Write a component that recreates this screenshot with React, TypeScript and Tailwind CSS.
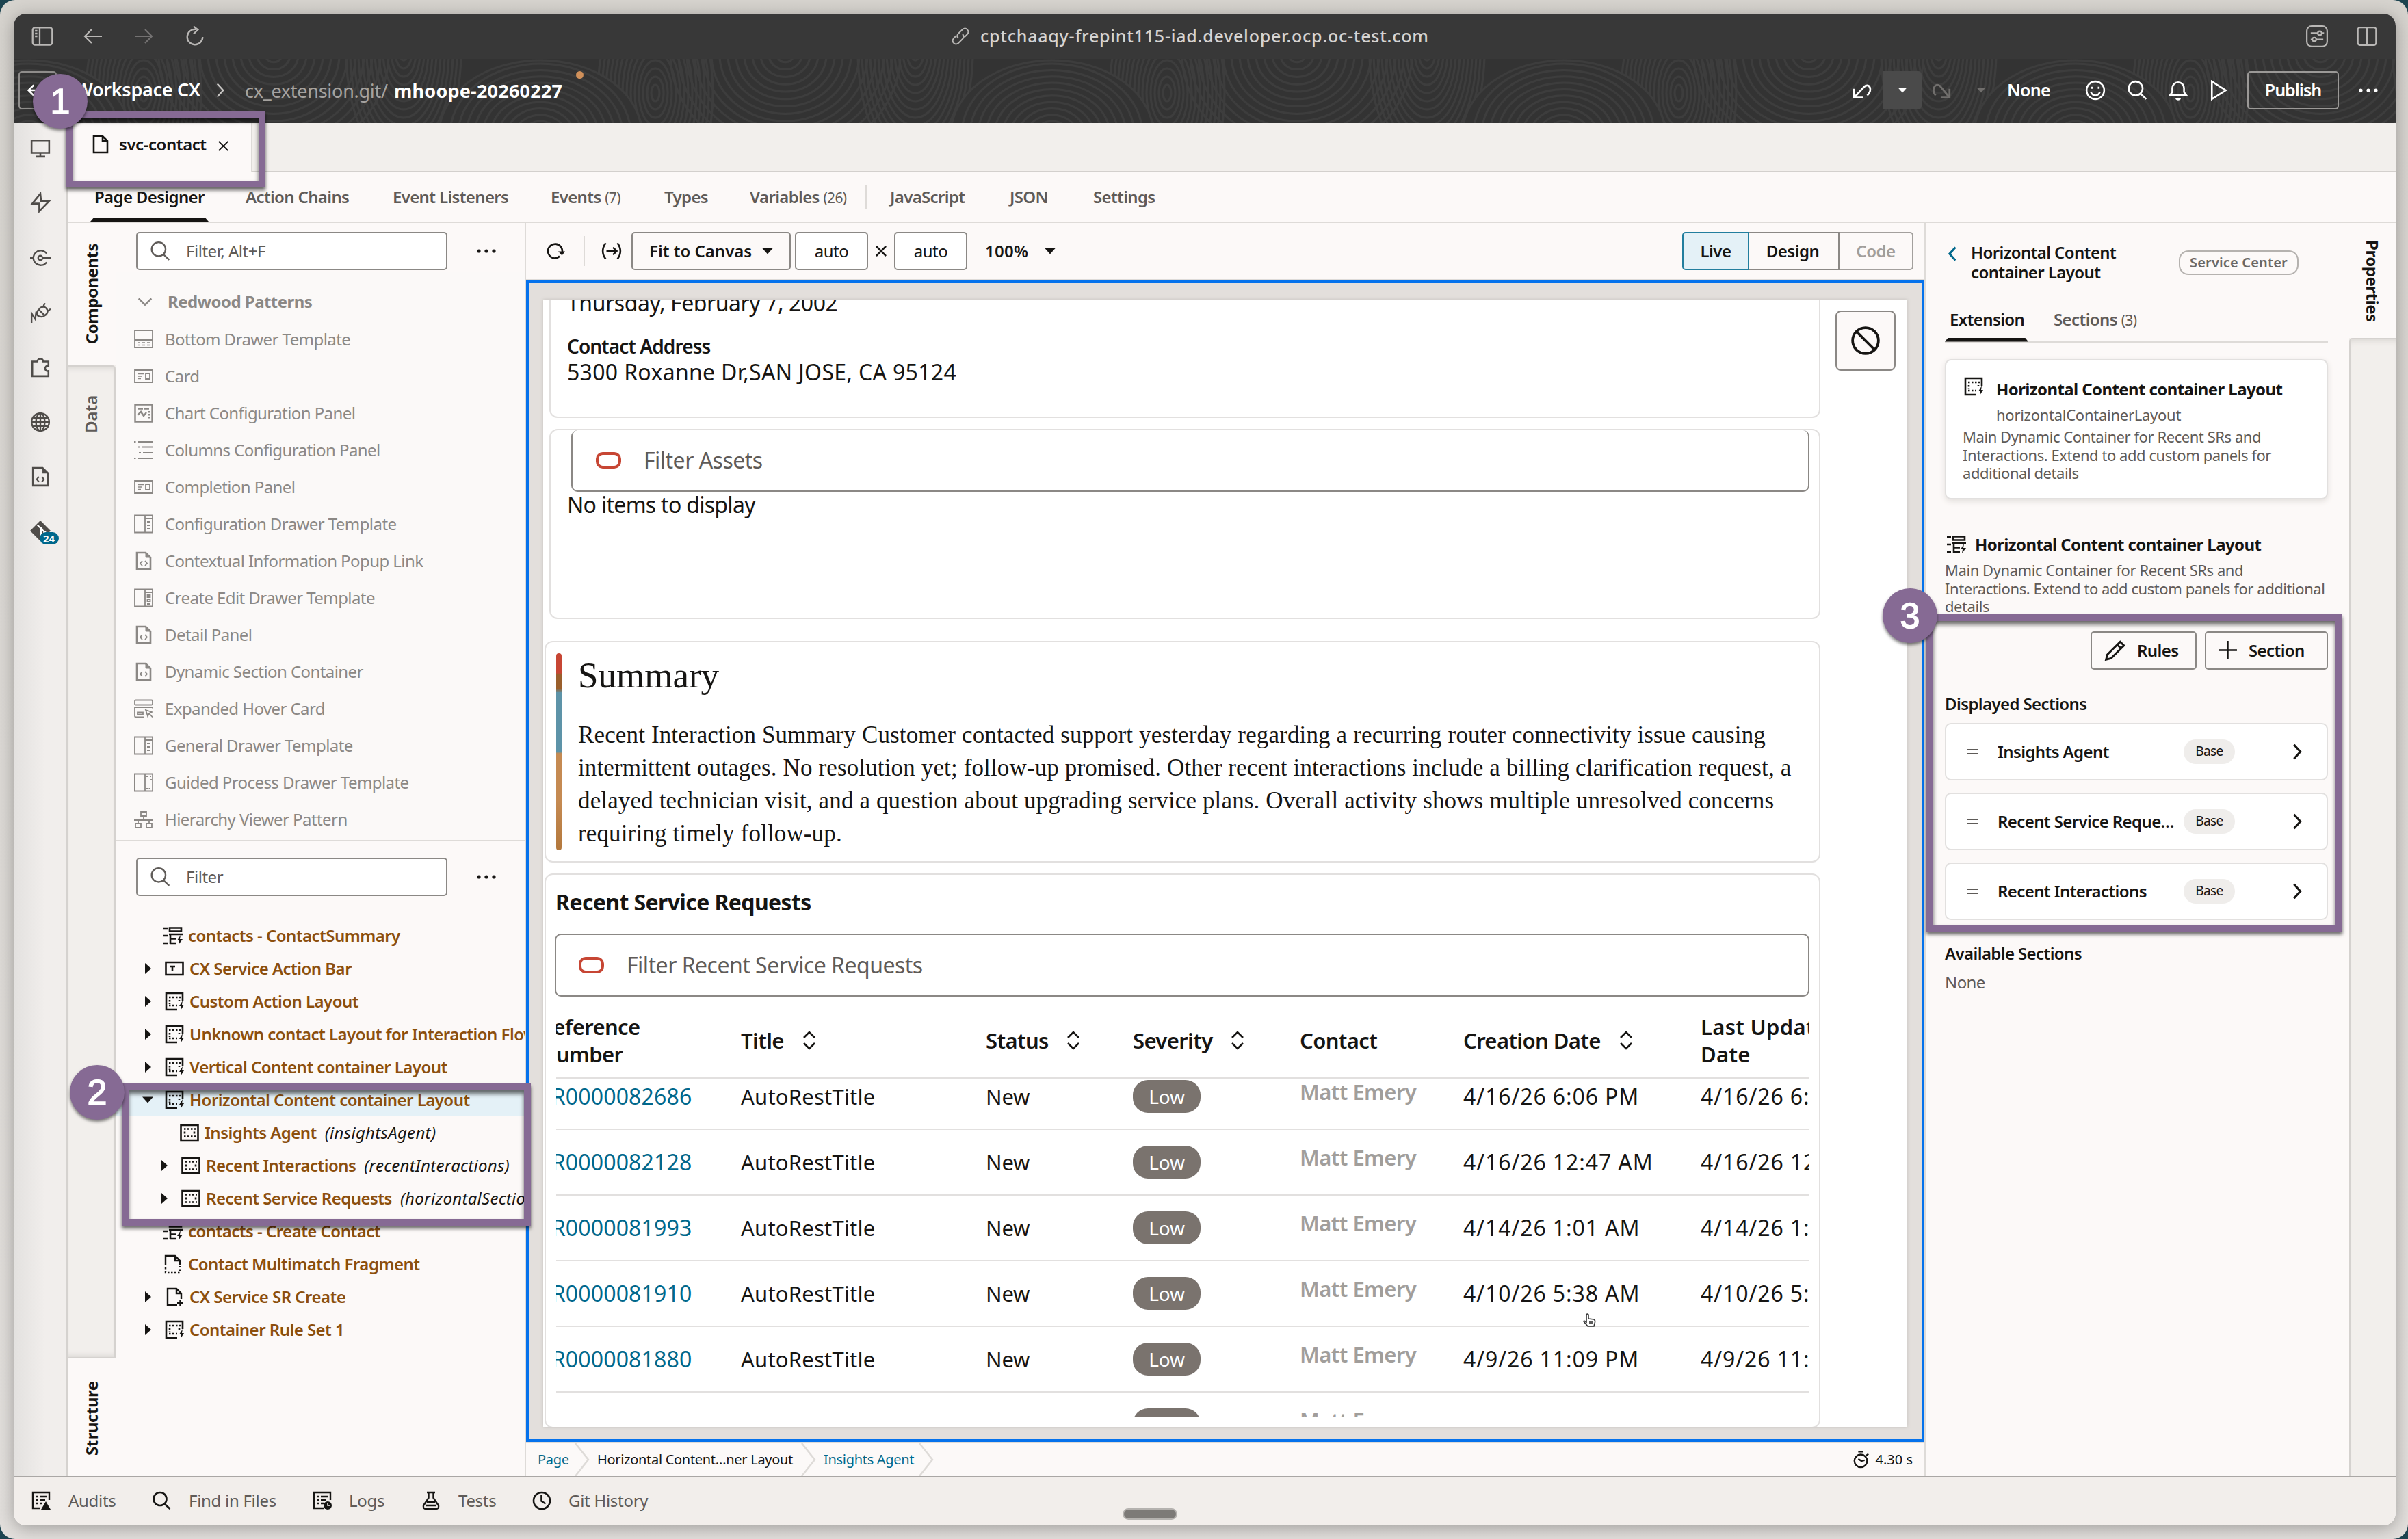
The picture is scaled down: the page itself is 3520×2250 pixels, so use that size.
import type { ReactNode } from "react";

interface IconProps {
  size?: number;
  sw?: number;
  className?: string;
  children?: ReactNode;
}

function Svg({ size = 28, sw = 2, className = "", children }: IconProps) {
  return (
    <svg
      width={size}
      height={size}
      viewBox="0 0 28 28"
      fill="none"
      stroke="currentColor"
      strokeWidth={sw}
      className={`shrink-0 ${className}`}
    >
      {children}
    </svg>
  );
}

function Caret({ className = "" }: { className?: string }) {
  return (
    <svg width="16" height="10" viewBox="0 0 16 10" fill="currentColor" className={`shrink-0 ${className}`}>
      <path d="M0 0.5h16L8 9.5z" />
    </svg>
  );
}

function SearchIcon({ size = 30, sw = 2.2, className = "" }: IconProps) {
  return (
    <Svg size={size} sw={sw} className={className}>
      <circle cx="12" cy="11.5" r="9.5" />
      <path d="M18.5 18.5l8 7.5" />
    </Svg>
  );
}

function MoreIcon({ className = "" }: { className?: string }) {
  return (
    <Svg className={className}>
      <g fill="currentColor" stroke="none">
        <circle cx="3" cy="14" r="2.6" />
        <circle cx="14" cy="14" r="2.6" />
        <circle cx="25" cy="14" r="2.6" />
      </g>
    </Svg>
  );
}

function CodeFileIcon({ size = 28 }: { size?: number }) {
  return (
    <Svg size={size} sw={2.6}>
      <path d="M4 2h13l7 7v17H4z" />
      <path d="M17 2v7h7z" fill="currentColor" strokeWidth="1" />
      <path d="M12 14l-3 3.5 3 3.5M16 14l3 3.5-3 3.5" strokeWidth="1.8" />
    </Svg>
  );
}

const patternIcons: Record<string, ReactNode> = {
  bottom: (
    <Svg sw={1.8}>
      <path d="M1 1h26v25H1zM1 15h26" />
      <path d="M5 19h18M5 22.5h18" strokeDasharray="4 3" strokeWidth="1.5" />
    </Svg>
  ),
  card: (
    <Svg sw={1.8}>
      <path d="M1 5h26v18H1zM17 10h6v8h-6z" />
      <path d="M5 10.5h9M5 14h7M5 17.5h5" strokeWidth="1.6" />
    </Svg>
  ),
  chart: (
    <Svg sw={2.4}>
      <path d="M1.500 1.500h25v25h-25z" />
      <path d="M5 7.500h8M15 7.500h7" strokeWidth="2.400" />
      <path d="M5 17l5-5 4 6 4-5" strokeWidth="2.400" />
      <path d="M21.500 11v12" strokeDasharray="2.500 1.500" strokeWidth="3" />
    </Svg>
  ),
  columns: (
    <Svg sw={2}>
      <path d="M6 2h22M11 9.500h17M13 18h15M6 26h22" />
      <path d="M0 2h2.500M5.500 9.500h3M7 18h3M0 26h2.500" />
    </Svg>
  ),
  drawer: (
    <Svg sw={1.8}>
      <path d="M1 1.500h26v25H1zM16 1.500v25M16 6h11" />
      <path d="M19 11h5M19 16h5M19 21h5" />
    </Svg>
  ),
  edit: (
    <Svg sw={1.8}>
      <path d="M1 1.500h26v25H1zM16 1.500v25M16 6h11" />
      <path d="M19.500 10h4v3h-4zM19.500 16h4v3h-4zM19 23h5" />
    </Svg>
  ),
  code: <CodeFileIcon />,
  hover: (
    <Svg sw={1.8}>
      <rect x="1" y="1.500" width="26" height="7" rx="1.500" />
      <path d="M27 13.500v-1.500H1v12.500q0 2 2 2h11M5 19.500h8v3H5z" />
      <path d="M17 16l9 3-4 2-2 4zM22 21l5 5.500" />
    </Svg>
  ),
  guided: (
    <Svg sw={1.8}>
      <path d="M0.900 1.500h26.200v25H0.900zM16 1.500v25" />
      <path d="M18 5h3M23 5h2M25 9v3M18 23h7" strokeDasharray="2 1.500" />
    </Svg>
  ),
  hierarchy: (
    <Svg sw={1.8}>
      <path d="M10 3h8v6h-8zM2 20h8v6H2zM18 20h8v6h-8zM14 9v6M0 15h28M6 15v5M22 15v5" />
    </Svg>
  ),
};

const patterns = [
  ["bottom", "Bottom Drawer Template"],
  ["card", "Card"],
  ["chart", "Chart Configuration Panel"],
  ["columns", "Columns Configuration Panel"],
  ["card", "Completion Panel"],
  ["drawer", "Configuration Drawer Template"],
  ["code", "Contextual Information Popup Link"],
  ["edit", "Create Edit Drawer Template"],
  ["code", "Detail Panel"],
  ["code", "Dynamic Section Container"],
  ["hover", "Expanded Hover Card"],
  ["drawer", "General Drawer Template"],
  ["guided", "Guided Process Drawer Template"],
  ["hierarchy", "Hierarchy Viewer Pattern"],
];

function DynamicIcon() {
  return (
    <Svg sw={2.6}>
      <path d="M26 13V2H2v24h16" />
      <path d="M6 8h17M6 20h12" strokeDasharray="2.500 2.500" />
      <path d="M7 12v6M21 12v2" strokeDasharray="2.500 2" />
      <path d="M26 13l-5 8h3l-1 6 5-8h-3z" fill="currentColor" stroke="none" />
    </Svg>
  );
}

function FormIcon() {
  return (
    <Svg sw={2.6}>
      <path d="M0 3h6M0 14h6M0 25h6" />
      <path d="M9 2.500h17v5H9zM8 12h20M10 12v14M10 18.500h9M10 25h9" />
      <path d="M25 13l-5 8h3l-1 6 6-8h-4z" fill="currentColor" stroke="none" />
    </Svg>
  );
}

const treeIcons: Record<string, ReactNode> = {
  form: <FormIcon />,
  dynamic: <DynamicIcon />,
  text: (
    <Svg sw={2.6}>
      <path d="M1.500 5h25v18h-25zM7 11h8M11 11v7" />
    </Svg>
  ),
  flex: (
    <Svg sw={2.6}>
      <path d="M1.500 3h25v22h-25z" />
      <path d="M6 8.500h17M6 19.500h17" strokeDasharray="2.500 2.500" />
      <path d="M7 12.500v3M21 12.500v3" />
    </Svg>
  ),
  fragment: (
    <Svg sw={2.4}>
      <path d="M3 16V2h14l7 7v7M17 2v7h7" />
      <path d="M3 19v7h21v-9" strokeDasharray="2.500 2.500" />
    </Svg>
  ),
  page: (
    <Svg sw={2.4}>
      <path d="M18 26H4V2h13l7 7v8M17 2v7h7M18 23h9M22.500 18.500v9" />
    </Svg>
  ),
};

interface TreeRow {
  icon: string;
  label: string;
  id?: string;
  level?: number;
  state?: "open" | "closed";
  selected?: boolean;
}

const tree: TreeRow[] = [
  { icon: "form", label: "contacts - ContactSummary" },
  { icon: "text", label: "CX Service Action Bar", state: "closed" },
  { icon: "dynamic", label: "Custom Action Layout", state: "closed" },
  { icon: "dynamic", label: "Unknown contact Layout for Interaction Flow", state: "closed" },
  { icon: "dynamic", label: "Vertical Content container Layout", state: "closed" },
  { icon: "dynamic", label: "Horizontal Content container Layout", state: "open", selected: true },
  { icon: "flex", label: "Insights Agent", id: "(insightsAgent)", level: 1 },
  { icon: "flex", label: "Recent Interactions", id: "(recentInteractions)", level: 1, state: "closed" },
  { icon: "flex", label: "Recent Service Requests", id: "(horizontalSection)", level: 1, state: "closed" },
  { icon: "form", label: "contacts - Create Contact" },
  { icon: "fragment", label: "Contact Multimatch Fragment" },
  { icon: "page", label: "CX Service SR Create", state: "closed" },
  { icon: "dynamic", label: "Container Rule Set 1", state: "closed" },
];

const requests = [
  ["SR0000082686", "4/16/26 6:06 PM"],
  ["SR0000082128", "4/16/26 12:47 AM"],
  ["SR0000081993", "4/14/26 1:01 AM"],
  ["SR0000081910", "4/10/26 5:38 AM"],
  ["SR0000081880", "4/9/26 11:09 PM"],
  ["SR0000081875", "4/9/26 10:58 PM"],
];

function TitleBar() {
  return (
    <div className="flex h-[66px] items-center bg-[#383838] text-[#b9b7b5]">
      <Svg size={32} sw={2} className="ml-[26px]">
        <rect x="1.500" y="3" width="25" height="22" rx="3" />
        <path d="M10.500 3v22M4.500 7h3M4.500 10.500h3M4.500 14h3" />
      </Svg>
      <Svg size={28} sw={2.2} className="ml-[44px]">
        <path d="M27 14H2M12 4L2 14l10 10" />
      </Svg>
      <Svg size={28} sw={2.2} className="ml-[46px] text-[#747272]">
        <path d="M1 14h25M16 4l10 10-10 10" />
      </Svg>
      <Svg size={30} sw={2.2} className="ml-[46px]">
        <path d="M15 4.500a10.500 10.500 0 1 0 9.500 10.500M12 0.500l6 4.500-6 6" />
      </Svg>
      <Svg size={28} sw={2} className="ml-[1090px]">
        <path d="M11 17c-3-3-2-5 0-7l6-6c5-4 11 2 7 7l-4 4M17 11c3 3 2 5 0 7l-6 6c-5 4-11-2-7-7l4-4" />
      </Svg>
      <span className="ml-[15px] w-[1938px] text-[25px] font-medium tracking-[0.031em] text-[#d5d3d1]">
        cptchaaqy-frepint115-iad.developer.ocp.oc-test.com
      </span>
      <Svg size={32} sw={1.9}>
        <rect x="1" y="1" width="26" height="26" rx="6" />
        <path d="M6 10h9M20 10h3M6 18h2M13 18h9" />
        <circle cx="17.500" cy="10" r="2.500" />
        <circle cx="10.500" cy="18" r="2.500" />
      </Svg>
      <Svg size={30} sw={2.2} className="ml-[42px]">
        <rect x="1.500" y="2" width="25" height="24" rx="3" />
        <path d="M14 2v24" />
      </Svg>
    </div>
  );
}

function HeaderTexture() {
  const steps = [12, 24, 36, 48, 60, 72, 84, 96, 108, 120, 132, 144, 156, 168];
  return (
    <svg className="absolute inset-0 h-full w-full" fill="none" stroke="#3d3d3d" strokeWidth="3">
      <defs>
        <pattern id="rings" width="748" height="94" patternUnits="userSpaceOnUse">
          {steps.map((r) => (
            <ellipse key={`b${r}`} cx="380" cy="-6" rx={r} ry={r * 0.9} />
          ))}
          {steps.map((r) => (
            <ellipse key={`s${r}`} cx="190" cy="50" rx={r * 0.5} ry={r} />
          ))}
          {steps.map((r) => (
            <ellipse key={`t${r}`} cx="570" cy="-10" rx={r * 0.5} ry={r} />
          ))}
          <ellipse cx="22" cy="110" rx="148" ry="108" fill="#333333" />
          <ellipse cx="770" cy="110" rx="148" ry="108" fill="#333333" />
          {steps.slice(0, 11).map((r) => (
            <g key={`d${r}`}>
              <ellipse cx="22" cy="110" rx={r} ry={r * 0.78} />
              <ellipse cx="770" cy="110" rx={r} ry={r * 0.78} />
            </g>
          ))}
        </pattern>
      </defs>
      <rect width="100%" height="100%" fill="url(#rings)" stroke="none" />
    </svg>
  );
}

function Header() {
  return (
    <div className="relative h-[94px] bg-[#333333] text-white">
      <HeaderTexture />
      <div className="relative flex h-[94px] items-center pb-[3px]">
        <div className="ml-[7px] flex h-[56px] w-[56px] items-center rounded-[5px] border-2 border-[#8f8d8b] pl-[10px]">
          <Svg size={24} sw={3}>
            <path d="M27 14H3M12 5l-9 9 9 9" />
          </Svg>
        </div>
        <span className="ml-[27px] w-[200px] text-[27px] font-semibold tracking-[-0.01em] whitespace-nowrap">
          Workspace CX
        </span>
        <Svg size={24} sw={2.6} className="text-[#c9c7c5]">
          <path d="M9 3l10 11L9 25" />
        </Svg>
        <span className="ml-[24px] w-[218px] pt-[4px] text-[27px] tracking-[-0.01em] text-[#a5a29f]">
          cx_extension.git/
        </span>
        <span className="w-[266px] pt-[4px] text-[27px] font-bold tracking-[0.008em] whitespace-nowrap">
          mhoope-20260227
        </span>
        <span className="mb-[44px] h-[11px] w-[11px] rounded-full bg-[#d0905a]" />
        <div className="mr-[26px] ml-auto flex items-center">
          <Svg size={30} sw={2.6}>
            <path d="M3 12v12h12M3 24L17 9c7-6 12 5 4 12" />
          </Svg>
          <div className="ml-[16px] flex h-[56px] w-[56px] items-center justify-center rounded-r-[5px] bg-[#4a4a4a]">
            <Caret className="w-[12px]" />
          </div>
          <Svg size={30} sw={2.6} className="ml-[14px] text-[#706e6c]">
            <path d="M25 12v12H13M25 24L12 8C5 3 0 13 6 21" />
          </Svg>
          <Caret className="ml-[37px] w-[12px] text-[#706e6c]" />
          <span className="ml-[32px] w-[114px] text-[25px] font-semibold tracking-[-0.03em]">None</span>
          <Svg size={30} sw={2.4}>
            <circle cx="14" cy="14" r="12" />
            <path d="M8 16.500c2 6 10 6 12 0" />
            <path d="M9.500 9v3M18.500 9v3" />
          </Svg>
          <SearchIcon className="ml-[31px]" sw={2.4} />
          <Svg size={30} sw={2.4} className="ml-[30px]">
            <path d="M3 20.500h22l-3-4V11a8 8 0 0 0-16 0v5.500zM11 25q3 3 6 0" />
          </Svg>
          <Svg size={30} sw={2.4} className="ml-[30px]">
            <path d="M4 2l19 12L4 26z" />
          </Svg>
          <div className="ml-[26px] flex h-[56px] w-[134px] items-center justify-center rounded-[5px] border-2 border-[#9b9997] text-[25px] font-semibold tracking-[-0.04em]">
            Publish
          </div>
          <MoreIcon className="ml-[29px]" />
        </div>
      </div>
    </div>
  );
}

function Rail() {
  return (
    <div className="flex w-[79px] flex-col items-center border-r-2 border-[#d5d2cf] bg-linear-to-r from-[#e3e1df] to-[#f1eeec] to-60% pt-[21px] text-[#4f4c49]">
      <Svg size={30} sw={2.4}>
        <path d="M2 4h24v17H2zM14 21v4M7.500 26h13" />
      </Svg>
      <Svg size={30} sw={2.4} className="mt-[50px]">
        <path d="M14 2L3 15.500h9.500V26L26 12H15z" strokeLinejoin="miter" />
      </Svg>
      <Svg size={30} sw={2.2} className="mt-[51px]">
        <path d="M22.500 8a10 10 0 1 0 0 12M17 14h11M0 14h4" />
        <circle cx="14" cy="14" r="3" />
      </Svg>
      <Svg size={30} sw={2.2} className="mt-[50px]">
        <path d="M12 10l8 8c4-2 5-7 2-10s-8-2-10 2zM12 10c-4 3-3 8 0 9s6 1 8-1M18 6l2-5M24 12l4-3M11 18l-3-3-1 8-5-8v13" />
      </Svg>
      <Svg size={30} sw={2.4} className="mt-[50px]">
        <path d="M3 6h7c0-5 8-5 8 0h7v6c-6-1-6 8 0 7v7H3z" />
      </Svg>
      <Svg size={30} sw={2.2} className="mt-[50px]">
        <circle cx="14" cy="14" r="12" />
        <path d="M2 14h24M14 2v24M4 8.500h20M4 19.500h20" />
        <ellipse cx="14" cy="14" rx="6" ry="12" />
      </Svg>
      <div className="mt-[50px]">
        <CodeFileIcon size={30} />
      </div>
      <div className="relative mt-[49px]">
        <Svg size={30} sw={2}>
          <path d="M14 0l14 14-14 14L0 14z" fill="currentColor" stroke="none" />
          <path d="M10 6l5 5v10M15 11l5 5" stroke="#fff" />
          <g fill="#fff" stroke="none">
            <circle cx="15" cy="11" r="2" />
            <circle cx="15" cy="21" r="2" />
            <circle cx="20" cy="16" r="2" />
          </g>
        </Svg>
        <span className="absolute top-[17px] left-[14px] flex h-[18px] w-[28px] items-center justify-center rounded-full bg-[#00688c] text-[15px] font-bold text-white">
          24
        </span>
      </div>
    </div>
  );
}

const pageTabs = [
  { label: "Action Chains", width: "w-[215px]" },
  { label: "Event Listeners", width: "w-[231px]" },
  { label: "Events", count: "(7)", width: "w-[166px]" },
  { label: "Types", width: "w-[125px]" },
  { label: "Variables", count: "(26)", width: "w-[169px]" },
];

function PageTabs() {
  return (
    <>
      <div className="flex h-[72px]">
        <div className="flex w-[270px] items-center border-r-2 border-[#dedbd8] bg-[#fcf9f8] pb-[11px] pl-[34px]">
          <Svg size={28} sw={2.6}>
            <path d="M4 2h13l7 7v17H4zM17 2v7h7" />
          </Svg>
          <span className="ml-[13px] w-[137px] text-[24px] font-semibold tracking-[-0.018em]">svc-contact</span>
          <Svg size={17} sw={3.2} className="mt-[5px] ml-[7px]">
            <path d="M3 3l22 22M25 3L3 25" />
          </Svg>
        </div>
        <div className="flex-1 border-b-2 border-[#d3d0cd] bg-[#f2efec]" />
      </div>
      <div className="flex h-[74px] items-center border-b-2 border-[#dedbd8] bg-[#fcf9f8] pl-[39px] text-[24px] font-semibold tracking-[-0.027em] text-[#5f5b58]">
        <div className="relative flex h-full w-[221px] items-center text-[#161513]">
          Page Designer
          <span className="absolute bottom-0 -left-[6px] h-[6px] w-[173px] bg-[#161513] [clip-path:polygon(3%_0,97%_0,100%_100%,0_100%)]" />
        </div>
        {pageTabs.map((tab) => (
          <div key={tab.label} className={`${tab.width} whitespace-nowrap`}>
            {tab.label} {tab.count && <span className="text-[21px] font-normal">{tab.count}</span>}
          </div>
        ))}
        <span className="mr-[34px] h-[36px] w-[2px] bg-[#dedbd8]" />
        <span className="w-[175px]">JavaScript</span>
        <span className="w-[122px]">JSON</span>
        <span>Settings</span>
      </div>
    </>
  );
}

function FilterBox({ placeholder }: { placeholder: string }) {
  return (
    <div className="flex items-center pl-[30px]">
      <div className="flex h-[56px] w-[455px] items-center rounded-[5px] border-2 border-[#8b8885] bg-white pl-[18px] text-[#5f5b58]">
        <SearchIcon />
        <span className="ml-[23px] text-[24px] tracking-[-0.02em]">{placeholder}</span>
      </div>
      <MoreIcon className="ml-[43px]" />
    </div>
  );
}

function LeftPanel() {
  return (
    <div className="flex w-[670px] border-r-2 border-[#dedbd8]">
      <div className="flex w-[70px] flex-col bg-[#f2efec] text-[24px] leading-none">
        <div className="flex h-[208px] items-end justify-center bg-[#fcf9f8] pr-px pb-[31px] font-bold tracking-[-0.02em]">
          <span className="rotate-180 [writing-mode:vertical-rl]">Components</span>
        </div>
        <div className="flex flex-1 justify-center rounded-tr-[5px] border-y-2 border-r-2 border-[#d5d2cf] pt-[39px] font-semibold text-[#5f5b58] shadow-[inset_0_8px_8px_-6px_#d8d5d2,inset_0_-8px_8px_-6px_#d8d5d2]">
          <span className="h-[58px] rotate-180 [writing-mode:vertical-rl]">Data</span>
        </div>
        <div className="flex h-[172px] justify-center bg-[#fcf9f8] pt-[32px] pr-px font-bold tracking-[-0.02em]">
          <span className="h-[110px] rotate-180 [writing-mode:vertical-rl]">Structure</span>
        </div>
      </div>
      <div className="flex min-w-0 flex-1 flex-col overflow-hidden">
        <div className="h-[904px] border-b-2 border-[#dedbd8] bg-[#fbf9f8] text-[#8b8885]">
          <div className="h-[72px] bg-[#fcf9f8] pt-[13px] text-[#161513]">
            <FilterBox placeholder="Filter, Alt+F" />
          </div>
          <div className="flex h-[71px] items-center pt-[14px] pl-[30px]">
            <Svg size={26} sw={2.8}>
              <path d="M4 9l10 10L24 9" />
            </Svg>
            <span className="ml-[20px] text-[24px] font-bold tracking-[-0.023em]">Redwood Patterns</span>
          </div>
          {patterns.map(([icon, label]) => (
            <div key={label} className="flex h-[54px] items-center pl-[27px]">
              {patternIcons[icon]}
              <span className="ml-[17px] text-[24px] tracking-[-0.024em]">{label}</span>
            </div>
          ))}
        </div>
        <div className="pt-[24px]">
          <FilterBox placeholder="Filter" />
        </div>
        <div className="mt-[34px] text-[24px] font-semibold tracking-[-0.022em] whitespace-nowrap text-[#8c4f0d]">
          {tree.map((row) => (
            <div
              key={row.label}
              className={`flex h-[48px] items-center ${row.level ? "pl-[66px]" : "pl-[42px]"} ${row.selected ? "bg-[#e4f1f7]" : ""}`}
            >
              <span className={`flex shrink-0 items-center text-[#161513] ${row.state ? "w-[30px]" : "w-[28px]"}`}>
                {row.state === "closed" && (
                  <svg width="10" height="16" viewBox="0 0 10 16" fill="currentColor">
                    <path d="M1 0v16l9-8z" />
                  </svg>
                )}
                {row.state === "open" && <Caret className="-ml-[3px]" />}
              </span>
              <span className="text-[#161513]">{treeIcons[row.icon]}</span>
              <span className="ml-[8px]">{row.label}</span>
              {row.id && (
                <span className="ml-[12px] font-normal tracking-[0.012em] text-[#161513] italic">{row.id}</span>
              )}
            </div>
          ))}
        </div>
      </div>
    </div>
  );
}

function CanvasToolbar() {
  return (
    <div className="flex h-[84px] items-center border-b-2 border-[#dedbd8] text-[24px] font-semibold tracking-[-0.02em]">
      <Svg size={28} sw={2.6} className="ml-[29px]">
        <path d="M12 24.500a10.500 10.500 0 1 1 12-10v2" />
        <path d="M18 14.500h10l-4.500 6z" fill="currentColor" stroke="none" />
        <path d="M12 24.500q5 0 8-3" />
      </Svg>
      <span className="ml-[27px] h-[44px] w-[2px] bg-[#dedbd8]" />
      <Svg size={30} sw={2.4} className="ml-[24px]">
        <path d="M6 3q-8 11 0 22M22 3q8 11 0 22M7 14h14M16 9l5 5-5 5" />
      </Svg>
      <div className="ml-[14px] flex h-[56px] w-[233px] items-center rounded-[5px] border-2 border-[#8b8885] pl-[24px]">
        <span className="w-[165px] tracking-[0em] whitespace-nowrap">Fit to Canvas</span>
        <Caret />
      </div>
      <div className="ml-[6px] flex h-[56px] w-[107px] items-center justify-center rounded-[5px] border-2 border-[#8b8885] bg-white font-normal">
        auto
      </div>
      <div className="flex w-[38px] justify-center">
        <Svg size={18} sw={4}>
          <path d="M3 3l22 22M25 3L3 25" />
        </Svg>
      </div>
      <div className="flex h-[56px] w-[107px] items-center justify-center rounded-[5px] border-2 border-[#8b8885] bg-white font-normal">
        auto
      </div>
      <span className="ml-[26px] w-[87px] tracking-[0.01em]">100%</span>
      <Caret />
      <div className="mr-[16px] ml-auto flex h-[56px]">
        <div className="flex w-[98px] items-center justify-center rounded-l-[5px] border-2 border-[#227e9e] bg-[#e4f1f7]">
          Live
        </div>
        <div className="flex w-[132px] items-center justify-center border-y-2 border-r-2 border-[#8b8885] pr-[3px]">
          Design
        </div>
        <div className="flex w-[108px] items-center justify-center rounded-r-[5px] border-2 border-l-0 border-[#a3a09d] text-[#a19e9b]">
          Code
        </div>
      </div>
    </div>
  );
}

function SearchField({ placeholder }: { placeholder: string }) {
  return (
    <>
      <span className="h-[24px] w-[37px] rounded-[10px] border-[4px] border-[#c74634]" />
      <span className="ml-[33px] text-[32px] tracking-[-0.016em] text-[#5f5b58]">{placeholder}</span>
    </>
  );
}

function SortIcon() {
  return (
    <svg width="20" height="28" viewBox="0 0 20 28" fill="none" stroke="currentColor" strokeWidth="2.600">
      <path d="M2 10l8-8 8 8M2 18l8 8 8-8" />
    </svg>
  );
}

const columns = "grid grid-cols-[294px_358px_215px_244px_239px_347px_260px]";

function RequestsTable() {
  return (
    <div className="ml-[15px] h-[614px] w-[1832px] overflow-hidden pt-[10px] text-[31px] tracking-[-0.005em] whitespace-nowrap">
      <div className="-ml-[24px] w-[1960px]">
        <div className={`${columns} h-[110px] items-center border-b-2 border-[#e2e0df] font-semibold tracking-[-0.02em]`}>
          <span className="leading-[40px]">
            Reference
            <br />
            Number
          </span>
          <span className="flex items-center gap-[27px]">
            Title <SortIcon />
          </span>
          <span className="flex items-center gap-[26px]">
            Status <SortIcon />
          </span>
          <span className="flex items-center gap-[26px]">
            Severity <SortIcon />
          </span>
          <span>Contact</span>
          <span className="flex items-center gap-[27px]">
            Creation Date <SortIcon />
          </span>
          <span className="leading-[40px] tracking-[0.01em]">
            Last Updated
            <br />
            Date
          </span>
        </div>
        <div className="h-[494px] overflow-hidden">
          <div className="-mt-[21px]">
            {requests.map(([ref, date]) => (
              <div key={ref} className={`${columns} h-[96px] items-center border-b-2 border-[#e2e0df]`}>
                <span className="text-[32px] tracking-[0.005em] text-[#00688c]">{ref}</span>
                <span className="tracking-[0.007em]">AutoRestTitle</span>
                <span>New</span>
                <span className="flex h-[48px] w-[99px] items-center justify-center rounded-[22px] bg-[#7a736e] text-[28px] text-white">
                  Low
                </span>
                <span className="pb-[14px] font-semibold tracking-[-0.018em] text-[#a19e9b]">Matt Emery</span>
                <span className="text-[32px] tracking-[0.028em]">{date}</span>
                <span className="text-[32px] tracking-[0.028em]">{date}</span>
              </div>
            ))}
          </div>
        </div>
      </div>
    </div>
  );
}

function Canvas() {
  return (
    <div className="flex w-[2044px] flex-col">
      <CanvasToolbar />
      <div className="h-[1698px] border-[4px] border-[#0572ec] bg-[#e3dfdc] px-[21px] pt-[24px]">
        <div className="flex h-[1648px] overflow-hidden bg-white text-[#161513] shadow-[0_0_5px_#c4c0bd]">
          <div className="w-[1867px]">
            <div className="ml-[9px] flex h-[173px] flex-col rounded-b-[12px] border-2 border-t-0 border-[#e2e0df] pl-[24px]">
              <p className="-mt-[18px] text-[32px] leading-[46px] tracking-[-0.014em]">Thursday, February 7, 2002</p>
              <p className="mt-[21px] text-[28px] leading-[38px] font-semibold tracking-[-0.032em]">Contact Address</p>
              <p className="text-[32px] leading-[38px] tracking-[0.01em]">5300 Roxanne Dr,SAN JOSE, CA 95124</p>
            </div>
            <div className="mt-[16px] ml-[9px] h-[278px] rounded-[12px] border-2 border-[#e2e0df]">
              <div className="ml-[30px] flex h-[90px] w-[1810px] items-center rounded-[9px] border-2 border-t-0 border-[#8b8885] pl-[34px]">
                <SearchField placeholder="Filter Assets" />
              </div>
              <p className="ml-[24px] text-[32px] leading-[38px] tracking-[-0.022em]">No items to display</p>
            </div>
            <div className="mt-[32px] ml-[2px] flex h-[324px] rounded-[12px] border-2 border-[#e2e0df] pt-[16px] pl-[15px]">
              <div className="h-[288px] w-[8px] rounded-full bg-[linear-gradient(#c74634_0_10%,#9a5f2c_11%_18%,#5d93a8_20%_50%,#c58a52_51%_75%,#b3783c)]" />
              <div className="ml-[24px] font-['Liberation_Serif',serif]">
                <h2 className="text-[53px] leading-[64px]">Summary</h2>
                <p className="mt-[32px] text-[35px] leading-[48px] tracking-[0.004em] whitespace-nowrap">
                  Recent Interaction Summary Customer contacted support yesterday regarding a recurring router connectivity issue causing
                  <br />
                  intermittent outages. No resolution yet; follow-up promised. Other recent interactions include a billing clarification request, a
                  <br />
                  delayed technician visit, and a question about upgrading service plans. Overall activity shows multiple unresolved concerns
                  <br />
                  requiring timely follow-up.
                </p>
              </div>
            </div>
            <div className="mt-[16px] ml-[2px] h-[811px] rounded-[12px] border-2 border-[#e2e0df]">
              <h3 className="mt-[20px] ml-[14px] text-[32px] leading-[40px] font-bold tracking-[-0.019em]">
                Recent Service Requests
              </h3>
              <div className="mt-[26px] ml-[13px] flex h-[92px] w-[1834px] items-center rounded-[9px] border-2 border-[#8b8885] pl-[33px]">
                <SearchField placeholder="Filter Recent Service Requests" />
              </div>
              <RequestsTable />
            </div>
          </div>
          <div className="mt-[16px] ml-[22px] flex h-[88px] w-[88px] items-center justify-center rounded-[8px] border-2 border-[#8b8885] bg-[#fcf9f8]">
            <Svg size={44} sw={2.4}>
              <circle cx="14" cy="14" r="12" />
              <path d="M5.500 5.500l17 17" />
            </Svg>
          </div>
        </div>
      </div>
      <div className="flex flex-1 items-center border-t-2 border-[#dedbd8] text-[20px] tracking-[-0.015em] text-[#00688c]">
        <span className="ml-[17px] w-[54px]">Page</span>
        <Crumb />
        <span className="ml-[11px] w-[298px] whitespace-nowrap text-[#161513]">Horizontal Content…ner Layout</span>
        <Crumb />
        <span className="ml-[11px] w-[139px] whitespace-nowrap">Insights Agent</span>
        <Crumb />
        <Svg size={26} sw={2.6} className="ml-auto text-[#161513]">
          <circle cx="13" cy="16" r="10" />
          <path d="M9 1.500h8M21 8l4-3M9 13l5 3 5-1" />
        </Svg>
        <span className="mr-[17px] ml-[8px] tracking-[0em] text-[#161513]">4.30 s</span>
      </div>
    </div>
  );
}

function Crumb() {
  return (
    <svg width="22" height="48" viewBox="0 0 22 48" fill="none" stroke="#dedbd8" strokeWidth="2.500">
      <path d="M1 0l19 24L1 48" />
    </svg>
  );
}

function SectionRow({ label }: { label: string }) {
  return (
    <div className="mb-[18px] flex h-[84px] items-center rounded-[9px] border-2 border-[#e2e0df] bg-white pl-[31px]">
      <div className="h-[8px] w-[15px] border-y-2 border-[#5f5b58]" />
      <span className="ml-[29px] w-[272px] font-semibold tracking-[-0.025em] whitespace-nowrap">{label}</span>
      <span className="flex h-[36px] w-[75px] items-center justify-center rounded-full bg-[#efedeb] text-[19px]">Base</span>
      <Svg size={26} sw={3.4} className="ml-[78px]">
        <path d="M9 3l10 11L9 25" />
      </Svg>
    </div>
  );
}

function PropertiesPanel() {
  return (
    <div className="flex flex-1 border-l-2 border-[#dedbd8] text-[24px] tracking-[-0.025em]">
      <div className="w-[619px] pt-[28px] pr-[31px] pl-[28px]">
        <div className="flex">
          <Svg size={24} sw={3.6} className="mt-[5px] text-[#00688c]">
            <path d="M18 3L8 14l10 11" />
          </Svg>
          <p className="ml-[14px] w-[304px] leading-[29px] font-semibold">
            Horizontal Content
            <br />
            container Layout
          </p>
          <span className="mt-[12px] flex h-[36px] w-[175px] items-center justify-center rounded-[14px] border-2 border-[#b5b2af] text-[20px] font-semibold tracking-[0.008em] text-[#6b6865]">
            Service Center
          </span>
        </div>
        <div className="flex h-[89px] items-center border-b-2 border-[#dedbd8] pt-[22px] pl-[7px] font-semibold">
          <span className="relative flex h-[66px] w-[152px] items-center">
            Extension
            <span className="absolute bottom-0 -left-[7px] h-[6px] w-[122px] bg-[#161513] [clip-path:polygon(4%_0,96%_0,100%_100%,0_100%)]" />
          </span>
          <span className="text-[#5f5b58]">
            Sections <span className="text-[21px] font-normal">(3)</span>
          </span>
        </div>
        <div className="mt-[24px] h-[205px] rounded-[9px] border-2 border-[#e2e0df] bg-white pt-[24px] pl-[24px] shadow-[0_3px_8px_#e2dedb]">
          <div className="flex">
            <div className="ml-[2px]">
              <DynamicIcon />
            </div>
            <span className="ml-[19px] leading-[36px] font-bold whitespace-nowrap">Horizontal Content container Layout</span>
          </div>
          <p className="ml-[49px] text-[22px] leading-[38px] tracking-[-0.012em] text-[#5f5b58]">
            horizontalContainerLayout
          </p>
          <p className="text-[22px] leading-[26.5px] tracking-[-0.02em] whitespace-nowrap text-[#5f5b58]">
            Main Dynamic Container for Recent SRs and
            <br />
            Interactions. Extend to add custom panels for
            <br />
            additional details
          </p>
        </div>
        <div className="mt-[48px] flex items-center pl-[3px]">
          <FormIcon />
          <span className="ml-[13px] leading-[36px] font-bold whitespace-nowrap">Horizontal Content container Layout</span>
        </div>
        <p className="mt-[6px] text-[22px] leading-[26.5px] tracking-[-0.02em] whitespace-nowrap text-[#5f5b58]">
          Main Dynamic Container for Recent SRs and
          <br />
          Interactions. Extend to add custom panels for additional
          <br />
          details
        </p>
        <div className="mt-[23px] flex justify-end gap-[12px] font-semibold">
          <div className="flex h-[56px] w-[155px] items-center rounded-[5px] border-2 border-[#8b8885] pl-[17px]">
            <Svg size={34} sw={2.4}>
              <path d="M3 25l1.500-6L20 3.500l4.500 4.500L9 23.500zM16.500 7l4.500 4.500" />
            </Svg>
            <span className="ml-[15px]">Rules</span>
          </div>
          <div className="flex h-[56px] w-[180px] items-center rounded-[5px] border-2 border-[#8b8885] pl-[17px]">
            <Svg size={29} sw={2.4}>
              <path d="M14 1v26M1 14h26" />
            </Svg>
            <span className="ml-[16px]">Section</span>
          </div>
        </div>
        <p className="mt-[33px] mb-[11px] leading-[34px] font-semibold">Displayed Sections</p>
        <SectionRow label="Insights Agent" />
        <SectionRow label="Recent Service Reque…" />
        <SectionRow label="Recent Interactions" />
        <p className="mt-[32px] leading-[34px] font-semibold">Available Sections</p>
        <p className="mt-[8px] leading-[34px] text-[#5f5b58]">None</p>
      </div>
      <div className="flex flex-1 flex-col bg-[#f2efec]">
        <div className="flex h-[168px] justify-center bg-[#fcf9f8] pt-[25px] leading-none font-bold tracking-[-0.02em]">
          <span className="[writing-mode:vertical-rl]">Properties</span>
        </div>
        <div className="flex-1 rounded-tl-[5px] border-t-2 border-l-2 border-[#d5d2cf] shadow-[inset_0_8px_8px_-6px_#d8d5d2]" />
      </div>
    </div>
  );
}

function StatusBar() {
  return (
    <div className="flex h-[72px] items-center border-t-2 border-[#aaa7a5] bg-[#f2eeeb] pb-[2px] pl-[26px] text-[24px] tracking-[-0.012em] whitespace-nowrap text-[#5f5b58]">
      <Svg size={28} sw={2.4} className="text-[#161513]">
        <path d="M26 13V2H2v23h11M6 8h3M12 8h11M6 13h3M12 13h8M6 18h3M12 18h3" />
        <path d="M21 15l7 12H14z" fill="currentColor" stroke="none" />
      </Svg>
      <span className="ml-[26px] w-[122px]">Audits</span>
      <SearchIcon size={28} sw={2.6} className="text-[#161513]" />
      <span className="ml-[26px] w-[181px]">Find in Files</span>
      <Svg size={28} sw={2.4} className="text-[#161513]">
        <path d="M26 13V2H2v23h14M6 8h3M12 8h11M6 13h3M12 13h8M6 18h3M12 18h5" />
        <circle cx="22" cy="21" r="6" fill="currentColor" stroke="none" />
        <path d="M22 17.500V21h3" stroke="#f2eeeb" strokeWidth="1.500" />
      </Svg>
      <span className="ml-[25px] w-[106px]">Logs</span>
      <Svg size={28} sw={2.4} className="text-[#161513]">
        <path d="M8 2h12M10.500 2v8L3 21q-1 5 4 5h14q5 0 4-5l-7.500-11V2M8 16h12M6 21h16" />
      </Svg>
      <span className="ml-[26px] w-[108px]">Tests</span>
      <Svg size={28} sw={2.6} className="text-[#161513]">
        <circle cx="14" cy="14" r="12" />
        <path d="M13.500 6v8.500l6 4" />
      </Svg>
      <span className="ml-[25px] w-[810px]">Git History</span>
      <span className="mt-[38px] h-[17px] w-[80px] rounded-full border-2 border-[#b5b2af] bg-[#7d7a77]" />
    </div>
  );
}

// Numbered annotation drawn over the app window
function Callout({ step, box, badge }: { step: number; box: string; badge: string }) {
  return (
    <>
      <div
        className={`absolute border-[10px] border-[#866a94] shadow-[0_4px_5px_rgba(0,0,0,0.6),inset_0_5px_6px_rgba(0,0,0,0.6)] ${box}`}
      />
      <div
        className={`absolute flex h-[80px] w-[80px] items-center justify-center rounded-full bg-[#866a94] font-['Liberation_Sans',sans-serif] text-[52px] leading-none text-white shadow-[0_3px_4px_rgba(0,0,0,0.5)] [-webkit-text-stroke:1.5px_white] ${badge}`}
      >
        {step}
      </div>
    </>
  );
}

export default function App() {
  return (
    <div className="relative h-[2250px] w-[3520px] overflow-hidden bg-[#1c4450] font-['Noto_Sans',sans-serif] text-[#161513]">
      <div className="h-full rounded-[22px] bg-[#d8d5d1] bg-linear-to-b from-[#d6d3ce] to-[#e2dfdc] px-[20px] pt-[20px]">
        <div className="flex h-[2210px] w-[3482px] flex-col overflow-hidden rounded-[18px] bg-[#fcf9f8] shadow-[0_4px_24px_rgba(0,0,0,0.3)]">
          <TitleBar />
          <Header />
          <div className="flex flex-1">
            <Rail />
            <div className="flex flex-1 flex-col">
              <PageTabs />
              <div className="flex flex-1">
                <LeftPanel />
                <Canvas />
                <PropertiesPanel />
              </div>
            </div>
          </div>
          <StatusBar />
        </div>
      </div>
      <Callout step={1} box="left-[96px] top-[162px] h-[112px] w-[292px]" badge="left-[48px] top-[108px]" />
      <Callout step={2} box="left-[178px] top-[1584px] h-[208px] w-[598px]" badge="left-[102px] top-[1557px]" />
      <Callout step={3} box="left-[2816px] top-[898px] h-[464px] w-[608px]" badge="left-[2752px] top-[860px]" />
      <svg
        width="20"
        height="22"
        viewBox="0 0 20 22"
        fill="#fff"
        stroke="#333"
        strokeWidth="1.600"
        className="absolute top-[1919px] left-[2313px]"
      >
        <path d="M6 12V3q1.500-2 3 0v6l8 1q2 1 1.500 4l-1.500 6H8l-6-7q0-2 4 1zM11 13v4M14 13v4" />
      </svg>
    </div>
  );
}
